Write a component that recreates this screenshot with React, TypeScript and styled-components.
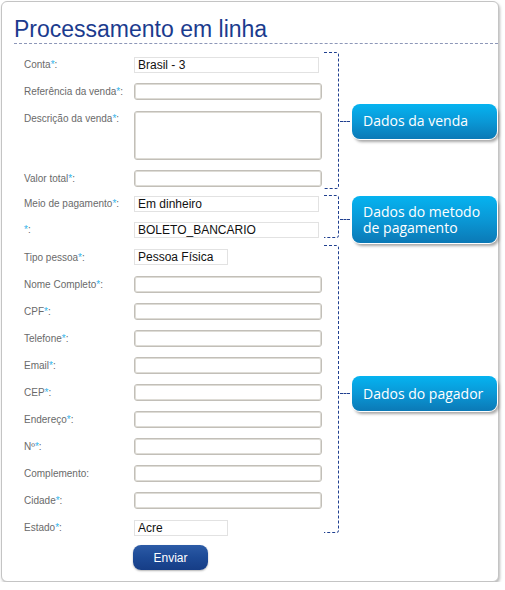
import React from "react";
import styled, { createGlobalStyle } from "styled-components";

const Global = createGlobalStyle`
  html, body { margin: 0; padding: 0; background: #fff; }
  body { font-family: "Liberation Sans", Arial, sans-serif; }
`;

const Card = styled.div`
  box-sizing: border-box;
  width: 498px;
  height: 581px;
  margin: 1px 0 0 1px;
  border: 1px solid #c4c4c4;
  border-radius: 6px;
  background: #fff;
  box-shadow: 1px 2px 3px rgba(0, 0, 0, 0.28);
  padding-top: 14px;
  display: flex;
  flex-direction: column;
`;

const Title = styled.h1`
  margin: 0 0 0 12px;
  font-family: "Liberation Sans", Arial, sans-serif;
  font-weight: normal;
  font-size: 23px;
  line-height: 27px;
  color: #1b3b8e;
  border-bottom: 1px dashed #8d97b8;
`;

const Form = styled.form`
  padding: 7px 0 0 22px;
  display: flex;
  flex-direction: column;
`;

const Group = styled.div`
  display: flex;
  align-items: stretch;
`;

const Fields = styled.div`
  width: 298px;
  display: flex;
  flex-direction: column;
`;

const Row = styled.div<{ $h: number; $top?: number }>`
  height: ${(p) => p.$h}px;
  display: grid;
  grid-template-columns: 110px 188px;
  align-items: ${(p) => (p.$top !== undefined ? "start" : "center")};
  padding-top: ${(p) => p.$top ?? 0}px;
  box-sizing: border-box;
`;

const Label = styled.label<{ $shift?: number }>`
  font-size: 10px;
  line-height: 13px;
  color: #6a6a6a;
  margin-top: ${(p) => p.$shift ?? 0}px;
`;

const Star = styled.span`
  color: #35b4ea;
`;

const TextInput = styled.input`
  box-sizing: border-box;
  width: 188px;
  height: 17px;
  margin: 0;
  border: 1px solid #c2bfb8;
  box-shadow: inset 0 0 0 1px #dedcd6;
  border-radius: 3px;
  background: #fff;
  font: 12px "Liberation Sans", Arial, sans-serif;
  padding: 0 4px;
  outline: none;
`;

const TextArea = styled.textarea`
  box-sizing: border-box;
  width: 188px;
  height: 49px;
  margin: 0;
  border: 1px solid #c2bfb8;
  box-shadow: inset 0 0 0 1px #dedcd6;
  border-radius: 3px;
  background: #fff;
  resize: none;
  outline: none;
  font: 12px "Liberation Sans", Arial, sans-serif;
`;

const Select = styled.select<{ $w: number }>`
  appearance: none;
  -webkit-appearance: none;
  box-sizing: border-box;
  width: ${(p) => p.$w}px;
  height: 16px;
  margin: 0;
  border: 1px solid #e2e2e2;
  border-radius: 0;
  background: #fff;
  color: #111;
  font: 12px "Liberation Sans", Arial, sans-serif;
  line-height: 14px;
  padding: 0 0 0 3px;
  outline: none;
`;

const Bracket = styled.div<{ $mt: number; $mb: number }>`
  box-sizing: border-box;
  width: 15px;
  margin: ${(p) => p.$mt}px 0 ${(p) => p.$mb}px 2px;
  border-top: 1px dashed #1f3f8f;
  border-right: 1px dashed #1f3f8f;
  border-bottom: 1px dashed #1f3f8f;
  border-radius: 0 3px 3px 0;
`;

const Note = styled.div<{ $dy?: number }>`
  display: flex;
  align-items: center;
  align-self: center;
  margin-top: ${(p) => p.$dy ?? 0}px;
`;

const Connector = styled.div`
  width: 10px;
  margin-left: 1px;
  border-top: 1px dashed #1f3f8f;
`;

const Callout = styled.div<{ $h: number }>`
  box-sizing: border-box;
  width: 145px;
  height: ${(p) => p.$h}px;
  margin-left: 2px;
  padding: 0 6px 0 11px;
  border-radius: 8px;
  background: linear-gradient(to bottom, #05b3f0 0%, #0a98d6 50%, #0b79b6 100%);
  box-shadow: 0 0 0 1px #ffffff, 2px 3px 3px rgba(0, 0, 0, 0.35);
  color: #fff;
  font-family: "Open Sans", "Noto Sans", sans-serif;
  font-size: 14px;
  line-height: 16px;
  display: flex;
  align-items: center;
`;

const ButtonRow = styled.div`
  padding: 4px 0 0 109px;
`;

const Button = styled.button`
  width: 75px;
  height: 25px;
  border: none;
  border-radius: 8px;
  background: linear-gradient(to bottom, #2c5ba6 0%, #1d4a96 50%, #163d86 100%);
  box-shadow: 0 1px 2px rgba(0, 0, 0, 0.3);
  color: #fff;
  font: 12px "Liberation Sans", Arial, sans-serif;
  padding: 0;
  cursor: pointer;
`;

const Req = ({ text }: { text: string }) => (
  <>
    {text}
    <Star>*</Star>:
  </>
);

const payerFields = [
  "Nome Completo",
  "CPF",
  "Telefone",
  "Email",
  "CEP",
  "Endereço",
  "Nº",
];

export default function App() {
  return (
    <>
      <Global />
      <Card>
        <Title>Processamento em linha</Title>
        <Form onSubmit={(e) => e.preventDefault()}>
          <Group>
            <Fields>
              <Row $h={27}>
                <Label><Req text="Conta" /></Label>
                <Select $w={185} defaultValue="b3">
                  <option value="b3">Brasil - 3</option>
                </Select>
              </Row>
              <Row $h={27}>
                <Label><Req text="Referência da venda" /></Label>
                <TextInput />
              </Row>
              <Row $h={60} $top={6}>
                <Label $shift={1}><Req text="Descrição da venda" /></Label>
                <TextArea />
              </Row>
              <Row $h={26}>
                <Label><Req text="Valor total" /></Label>
                <TextInput />
              </Row>
            </Fields>
            <Bracket $mt={1} $mb={2} />
            <Note>
              <Connector />
              <Callout $h={35}>Dados da venda</Callout>
            </Note>
          </Group>

          <Group>
            <Fields>
              <Row $h={25}>
                <Label><Req text="Meio de pagamento" /></Label>
                <Select $w={185} defaultValue="d">
                  <option value="d">Em dinheiro</option>
                </Select>
              </Row>
              <Row $h={27}>
                <Label><Req text="" /></Label>
                <Select $w={185} defaultValue="b">
                  <option value="b">BOLETO_BANCARIO</option>
                </Select>
              </Row>
            </Fields>
            <Bracket $mt={4} $mb={5} />
            <Note $dy={5}>
              <Connector />
              <Callout $h={47}>Dados do metodo de pagamento</Callout>
            </Note>
          </Group>

          <Group>
            <Fields>
              <Row $h={28}>
                <Label><Req text="Tipo pessoa" /></Label>
                <Select $w={94} defaultValue="pf">
                  <option value="pf">Pessoa Física</option>
                </Select>
              </Row>
              {payerFields.map((f) => (
                <Row $h={27} key={f}>
                  <Label><Req text={f} /></Label>
                  <TextInput />
                </Row>
              ))}
              <Row $h={27}>
                <Label>Complemento:</Label>
                <TextInput />
              </Row>
              <Row $h={27}>
                <Label><Req text="Cidade" /></Label>
                <TextInput />
              </Row>
              <Row $h={27}>
                <Label><Req text="Estado" /></Label>
                <Select $w={94} defaultValue="ac">
                  <option value="ac">Acre</option>
                </Select>
              </Row>
            </Fields>
            <Bracket $mt={2} $mb={8} />
            <Note $dy={3}>
              <Connector />
              <Callout $h={35}>Dados do pagador</Callout>
            </Note>
          </Group>

          <ButtonRow>
            <Button type="submit">Enviar</Button>
          </ButtonRow>
        </Form>
      </Card>
    </>
  );
}
